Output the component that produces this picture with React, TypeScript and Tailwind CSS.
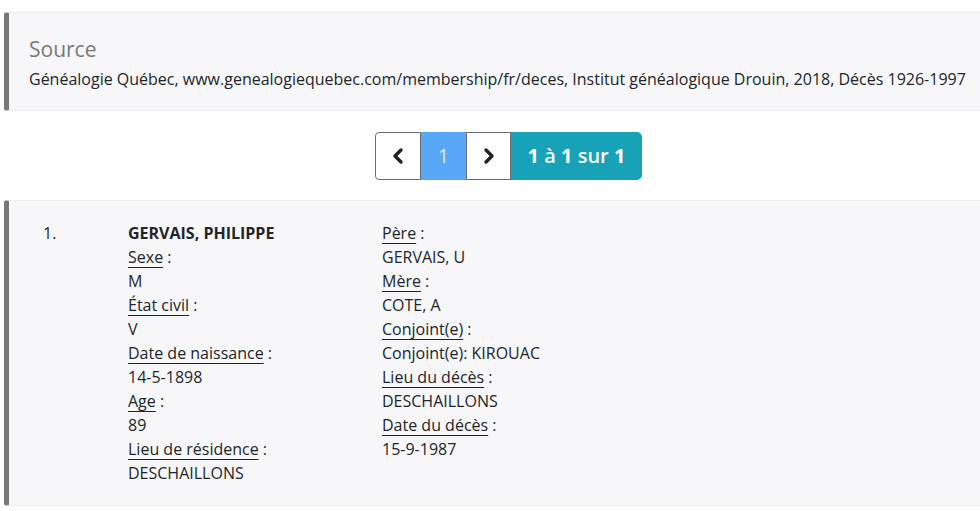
import { ChevronLeft, ChevronRight } from 'lucide-react';

const left = [
  { label: 'Sexe', value: 'M' },
  { label: 'État civil', value: 'V' },
  { label: 'Date de naissance', value: '14-5-1898' },
  { label: 'Age', value: '89' },
  { label: 'Lieu de résidence', value: 'DESCHAILLONS' },
];

const right = [
  { label: 'Père', value: 'GERVAIS, U' },
  { label: 'Mère', value: 'COTE, A' },
  { label: 'Conjoint(e)', value: 'Conjoint(e): KIROUAC' },
  { label: 'Lieu du décès', value: 'DESCHAILLONS' },
  { label: 'Date du décès', value: '15-9-1987' },
];

function Field({ label, value }: { label: string; value: string }) {
  return (
    <>
      <div>
        <span className="underline decoration-1 underline-offset-[4px] decoration-[#212529]">{label}</span> :
      </div>
      <div>{value}</div>
    </>
  );
}

export default function App() {
  return (
    <div
      className="w-[980px] h-[511px] overflow-hidden bg-white text-[#212529]"
      style={{ fontFamily: '"Open Sans", "Noto Sans", sans-serif' }}
    >
      <div className="w-[1009px] ml-[4px] pt-[12px]">
        {/* source callout */}
        <div className="bg-[#f7f7f9] border border-[#ececec] border-l-[5px] border-l-[#777] rounded-[3px] pl-[20px] pr-5 pt-[23px] pb-[19px]">
          <h4 className="text-[21px] leading-[26px] text-[#777] mb-[5px]">Source</h4>
          <p className="text-[16px] leading-6">
            Généalogie Québec, www.genealogiequebec.com/membership/fr/deces, Institut généalogique Drouin, 2018, Décès 1926-1997
          </p>
        </div>

        {/* pagination */}
        <div className="flex justify-center mt-[21px] mb-[20px]">
          <div className="flex h-[48px]">
            <button className="w-[46px] flex items-center justify-center bg-white border border-[#6c6c6c] rounded-l-[4px] text-[#222]">
              <ChevronLeft className="w-6 h-6" strokeWidth={3.4} />
            </button>
            <div className="w-[45px] flex items-center justify-center bg-[#59a8f7] text-[#dceaf9] text-[20px]">1</div>
            <button className="w-[45px] flex items-center justify-center bg-white border border-[#6c6c6c] text-[#222]">
              <ChevronRight className="w-6 h-6" strokeWidth={3.4} />
            </button>
            <div className="w-[131px] flex items-center justify-center bg-[#17a2b8] text-white text-[20px] font-semibold rounded-r-[5px]">
              <span>
                <b className="font-bold">1</b> à <b className="font-bold">1</b> sur <b className="font-bold">1</b>
              </span>
            </div>
          </div>
        </div>

        {/* record */}
        <div className="bg-[#f7f7f9] border border-[#ececec] border-l-[5px] border-l-[#777] rounded-[3px] pl-[20px] pt-[20px] pb-[20px] text-[16px] leading-6">
          <div className="flex">
            <div className="w-[99px] pl-[14px]">1.</div>
            <div className="w-[254px]">
              <div className="font-bold">GERVAIS, PHILIPPE</div>
              {left.map((f) => (
                <Field key={f.label} {...f} />
              ))}
            </div>
            <div>
              {right.map((f) => (
                <Field key={f.label} {...f} />
              ))}
            </div>
          </div>
        </div>
      </div>
    </div>
  );
}
